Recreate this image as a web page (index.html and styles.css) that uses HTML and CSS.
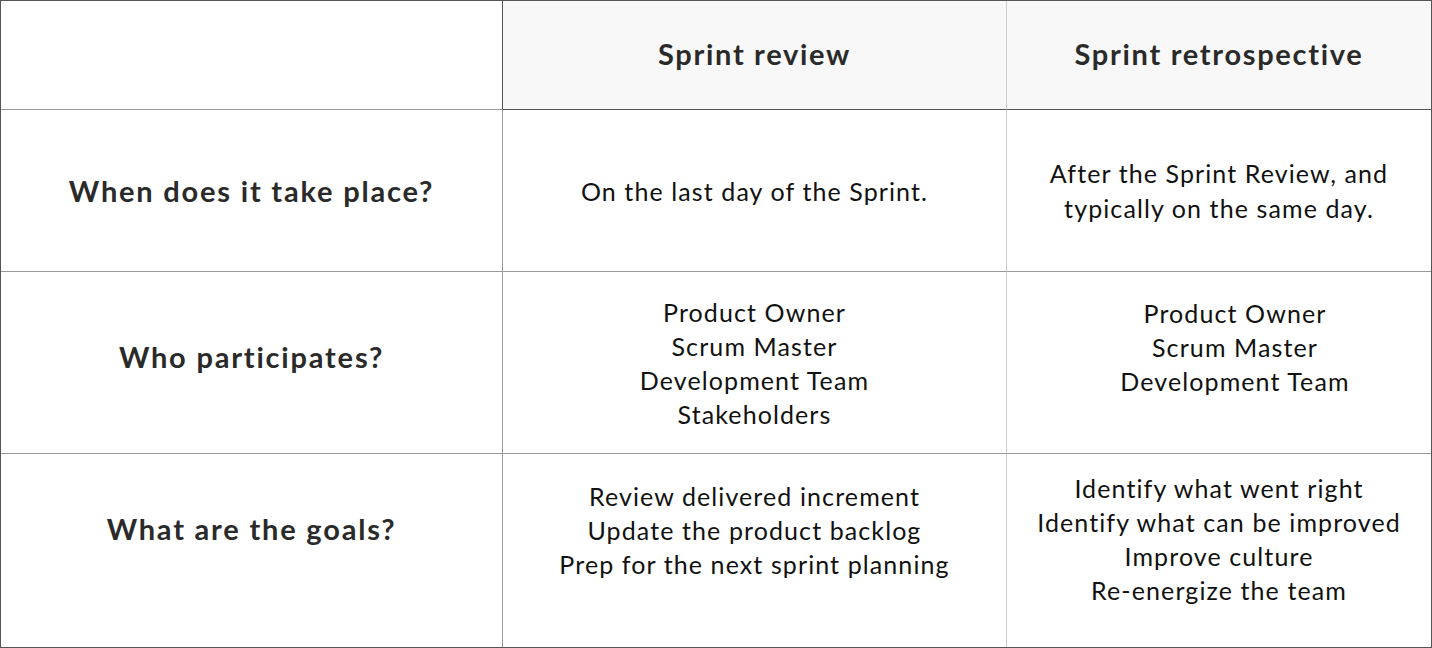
FILE: index.html
```html
<!DOCTYPE html>
<html lang="en">
<head>
<meta charset="utf-8">
<title>Sprint review vs Sprint retrospective</title>
<link rel="stylesheet" href="styles.css">
</head>
<body>
<div class="grid">
  <div class="cell head-empty"></div>
  <div class="cell head col2">Sprint review</div>
  <div class="cell head col3">Sprint retrospective</div>

  <div class="cell label r1">When does it take place?</div>
  <div class="cell body col2 r1"><p>On the last day of the Sprint.</p></div>
  <div class="cell body col3 r1"><p>After the Sprint Review, and<br>typically on the same day.</p></div>

  <div class="cell label r2 lab2">Who participates?</div>
  <div class="cell body col2 r2"><p>Product Owner<br>Scrum Master<br>Development Team<br>Stakeholders</p></div>
  <div class="cell body col3 r2 shift"><p>Product Owner<br>Scrum Master<br>Development Team</p></div>

  <div class="cell label r3 lab3">What are the goals?</div>
  <div class="cell body col2 r3 c2r3"><p>Review delivered increment<br>Update the product backlog<br>Prep for the next sprint planning</p></div>
  <div class="cell body col3 r3 c3r3"><p>Identify what went right<br>Identify what can be improved<br>Improve culture<br>Re-energize the team</p></div>
</div>
</body>
</html>
```

FILE: styles.css
```css
* { box-sizing: border-box; }
html, body { margin: 0; padding: 0; background: #fff; }
body { font-family: Lato, "Noto Sans", sans-serif; color: #1a1a1a; }

.grid {
  width: 1432px;
  height: 648px;
  border: 1px solid #555;
  display: grid;
  grid-template-columns: 502px 504px 424px;
  grid-template-rows: 109px 162px 182px 193px;
}

.cell {
  display: flex;
  align-items: center;
  justify-content: center;
  text-align: center;
  white-space: nowrap;
  border-right: 1px solid #999;
  border-bottom: 1px solid #999;
}
.cell.col2 { border-right-color: #ccc; }
.cell.col3 { border-right: none; }
.cell.r3 { border-bottom: none; }

.head-empty { border-right-color: #555; border-bottom-color: #999; }
.head {
  background: #f8f8f8;
  border-bottom-color: #555;
  font-weight: 700;
  font-size: 29px;
  letter-spacing: 1.7px;
  color: #2a2a2a;
  padding-bottom: 4px;
}

.label {
  font-weight: 700;
  font-size: 29px;
  letter-spacing: 1.8px;
  color: #2a2a2a;
}
.lab2 { padding-bottom: 12px; }
.lab3 { padding-bottom: 44px; }

.body p {
  margin: 0;
  font-size: 25px;
  letter-spacing: 1.1px;
  line-height: 34px;
  color: #111;
}
.body.r1 p { line-height: 35px; }
.col2.r1 { padding-top: 2px; }
.shift { align-items: flex-start; padding-top: 24px; padding-left: 32px; }
.c2r3 { padding-bottom: 42px; }
.c3r3 { padding-bottom: 24px; }
```
